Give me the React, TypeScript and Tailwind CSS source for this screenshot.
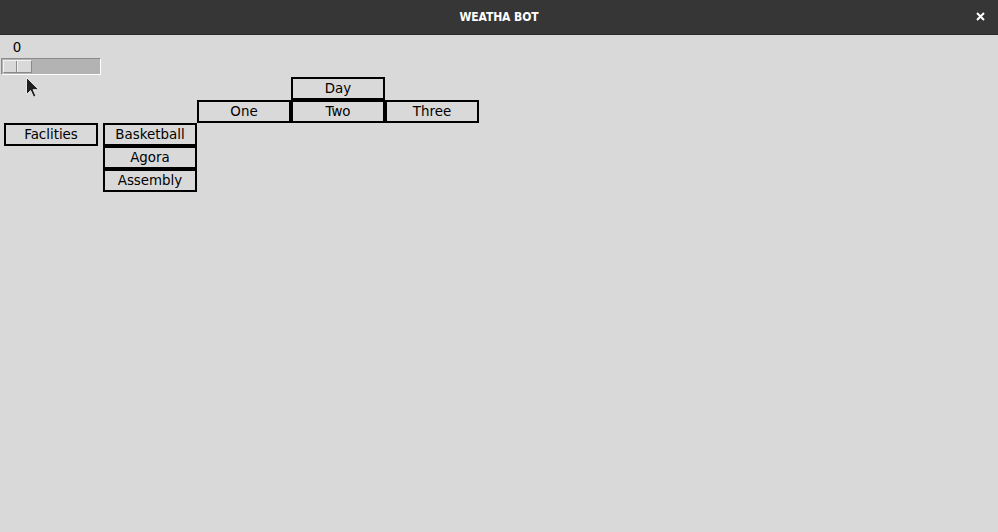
const cell =
  "flex h-[23px] w-[94px] items-center justify-center border-2 border-black text-[13.4px] leading-none text-black";

function Slider() {
  return (
    <div className="ml-[1px] flex h-[17px] w-[100px] border border-t-[#8a8a8a] border-l-[#8a8a8a] border-b-white border-r-white bg-[#b3b3b3] p-[1px]">
      <div className="flex h-full w-[29px] border border-t-[#f2f2f2] border-l-[#f2f2f2] border-b-[#8a8a8a] border-r-[#8a8a8a] bg-[#d9d9d9]">
        <div className="h-full w-[13px] border-r border-r-[#8a8a8a]" />
        <div className="h-full flex-1 border-l border-l-[#f2f2f2]" />
      </div>
    </div>
  );
}

function Cursor() {
  return (
    <svg
      className="absolute left-[25px] top-[76px]"
      width="16"
      height="24"
      viewBox="0 0 16 24"
    >
      <path
        d="M1.5 1.5 L1.5 18.5 L5.6 14.6 L8.6 21.2 L11 20.1 L8.1 13.7 L13.8 13.7 Z"
        fill="#1f1f1f"
        stroke="#e6e6e6"
        strokeWidth="1"
        strokeLinejoin="round"
      />
    </svg>
  );
}

export default function App() {
  return (
    <div
      className="relative flex h-[532px] w-[998px] flex-col overflow-hidden bg-[#d9d9d9]"
      style={{ fontFamily: '"DejaVu Sans", sans-serif' }}
    >
      <div className="relative flex h-[35px] shrink-0 items-center justify-center border-b border-b-[#2a2a2a] bg-[#363636]">
        <span
          className="text-[12px] font-bold tracking-[-0.1px] text-white"
          style={{ fontFamily: '"DejaVu Sans Condensed", "DejaVu Sans", sans-serif' }}
        >
          WEATHA BOT
        </span>
        <svg
          className="absolute right-[13px] top-[12px]"
          width="9"
          height="9"
          viewBox="0 0 9 9"
        >
          <path d="M1 1 L8 8 M8 1 L1 8" stroke="white" strokeWidth="2" />
        </svg>
      </div>

      <div className="grid grid-cols-[103px_94px_94px_94px_94px] grid-rows-[42px_23px_23px_23px_23px_23px]">
        <div className="col-start-1 row-start-1 flex flex-col pt-[5px]">
          <div className="h-[15px] w-[34px] text-center text-[13.4px] leading-[15px] text-black">
            0
          </div>
          <div className="mt-[3px]">
            <Slider />
          </div>
        </div>

        <div className={`${cell} col-start-4 row-start-2`}>Day</div>

        <div className={`${cell} col-start-3 row-start-3`}>One</div>
        <div className={`${cell} col-start-4 row-start-3`}>Two</div>
        <div className={`${cell} col-start-5 row-start-3`}>Three</div>

        <div className={`${cell} col-start-1 row-start-4 ml-[4px]`}>Faclities</div>
        <div className={`${cell} col-start-2 row-start-4`}>Basketball</div>
        <div className={`${cell} col-start-2 row-start-5`}>Agora</div>
        <div className={`${cell} col-start-2 row-start-6`}>Assembly</div>
      </div>

      <Cursor />
    </div>
  );
}
